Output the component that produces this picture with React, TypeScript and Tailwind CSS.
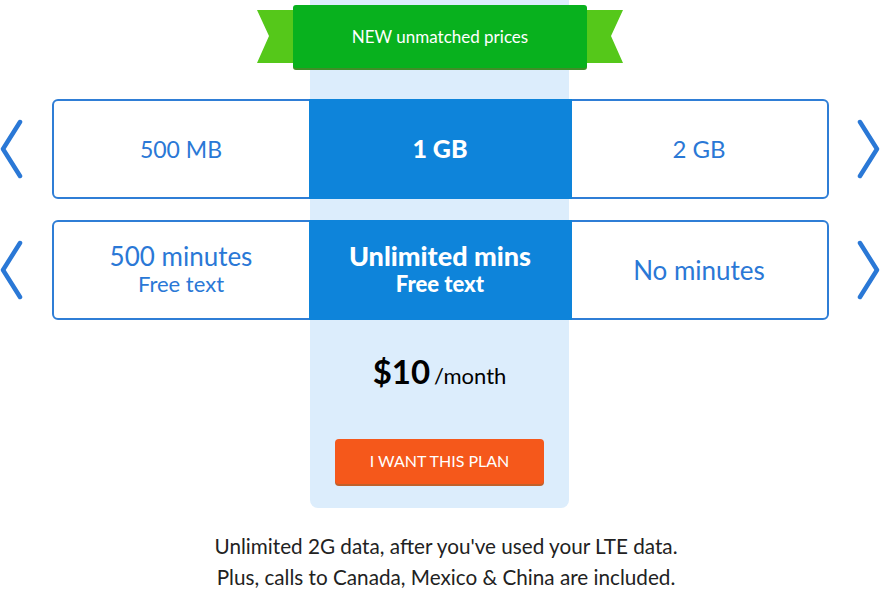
import React from 'react'

const Chevron = ({ dir }: { dir: 'left' | 'right' }) => (
  <svg width="24" height="60" viewBox="0 0 24 60" className="shrink-0">
    <path
      d={dir === 'left' ? 'M20 3 L3 30 L20 57' : 'M4 3 L21 30 L4 57'}
      fill="none"
      stroke="#2a78d6"
      strokeWidth="4.5"
      strokeLinecap="round"
      strokeLinejoin="round"
    />
  </svg>
)

const Ribbon = () => (
  <div className="relative flex h-[63px] w-[366px] justify-center">
    <svg width="366" height="63" viewBox="0 0 366 63" className="absolute left-0 top-0">
      <polygon points="0,5 40,5 40,58 0,58 12,31" fill="#55c81a" />
      <polygon points="366,5 326,5 326,58 366,58 354,31" fill="#55c81a" />
    </svg>
    <div className="relative flex h-[63px] w-[294px] items-center justify-center rounded-[3px] bg-[#08b11e] shadow-[0_2px_0_#3f8f28]">
      <span className="text-[17px] text-white">NEW unmatched prices</span>
    </div>
  </div>
)

const OptionRow = ({
  left,
  mid,
  right,
}: {
  left: React.ReactNode
  mid: React.ReactNode
  right: React.ReactNode
}) => (
  <div className="flex items-center justify-between">
    <Chevron dir="left" />
    <div className="grid h-[100px] w-[777px] grid-cols-[255px_263px_255px] rounded-[6px] border-2 border-[#2f7ed6] bg-white">
      <div className="flex flex-col items-center justify-center text-[#2a78d6]">{left}</div>
      <div className="-my-[2px] flex flex-col items-center justify-center bg-[#0e84da] text-white">
        {mid}
      </div>
      <div className="flex flex-col items-center justify-center text-[#2a78d6]">{right}</div>
    </div>
    <Chevron dir="right" />
  </div>
)

export default function App() {
  return (
    <div
      className="relative h-[602px] w-[892px] overflow-hidden bg-white"
      style={{ fontFamily: 'Lato, "Noto Sans", sans-serif' }}
    >
      {/* highlighted plan column */}
      <div className="absolute left-[310px] top-0 h-[508px] w-[259px] rounded-b-[8px] bg-[#dcedfc]" />

      <div className="relative flex flex-col">
        <div className="pl-[257px] pt-[5px]">
          <Ribbon />
        </div>

        <div className="mt-[31px] flex flex-col gap-[21px] pr-[12px]">
          <OptionRow
            left={<span className="text-[23px]">500 MB</span>}
            mid={<span className="text-[25px] font-black">1 GB</span>}
            right={<span className="text-[24px]">2 GB</span>}
          />
          <OptionRow
            left={
              <>
                <span className="text-[26px] leading-[28px]">500 minutes</span>
                <span className="text-[22px] leading-[28px]">Free text</span>
              </>
            }
            mid={
              <>
                <span className="text-[27px] font-black leading-[28px]">Unlimited mins</span>
                <span className="text-[22px] font-black leading-[28px]">Free text</span>
              </>
            }
            right={<span className="text-[26px]">No minutes</span>}
          />
        </div>

        <div className="ml-[310px] flex w-[259px] flex-col items-center">
          <div className="mt-[27px] flex items-baseline text-black">
            <span className="text-[33px] font-bold">$10</span>
            <span className="ml-[4px] text-[22px]">/month</span>
          </div>
          <button className="mt-[42px] h-[45px] w-[209px] rounded-[4px] bg-[#f5581b] text-[16px] text-white shadow-[0_2px_0_#c0602a]">
            I WANT THIS PLAN
          </button>
        </div>

        <div className="mt-[47px] flex flex-col items-center text-[20.7px] leading-[31px] text-[#222]">
          <span>Unlimited 2G data, after you've used your LTE data.</span>
          <span>Plus, calls to Canada, Mexico &amp; China are included.</span>
        </div>
      </div>
    </div>
  )
}
